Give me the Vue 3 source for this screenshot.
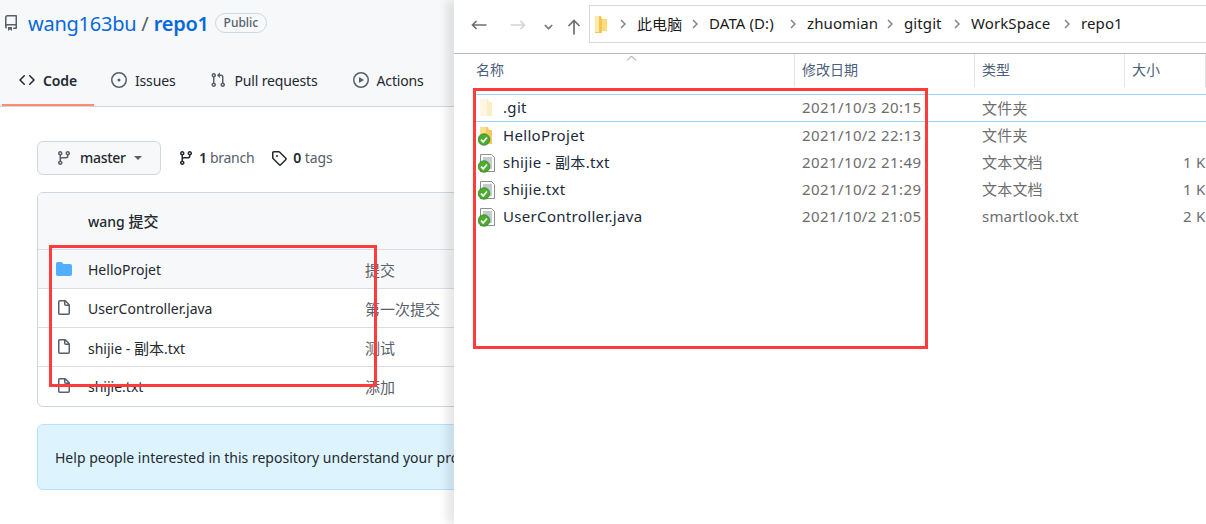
<script setup>
const tabs = [
  { label: 'Code', icon: 'code', active: true },
  { label: 'Issues', icon: 'issue' },
  { label: 'Pull requests', icon: 'pr' },
  { label: 'Actions', icon: 'play' },
]
const icons = {
  repo: 'M2 2.5A2.5 2.5 0 014.5 0h8.75a.75.75 0 01.75.75v12.5a.75.75 0 01-.75.75h-2.5a.75.75 0 110-1.5h1.75v-2h-8a1 1 0 00-.714 1.7.75.75 0 01-1.072 1.05A2.495 2.495 0 012 11.5v-9zm10.5-1V9h-8c-.356 0-.694.074-1 .208V2.5a1 1 0 011-1h8zM5 12.25v3.25a.25.25 0 00.4.2l1.45-1.087a.25.25 0 01.3 0L8.6 15.7a.25.25 0 00.4-.2v-3.25a.25.25 0 00-.25-.25h-3.5a.25.25 0 00-.25.25z',
  code: 'M4.72 3.22a.75.75 0 011.06 1.06L2.06 8l3.72 3.72a.75.75 0 11-1.06 1.06L.47 8.53a.75.75 0 010-1.06l4.25-4.25zm6.56 0a.75.75 0 10-1.06 1.06L13.94 8l-3.72 3.72a.75.75 0 101.06 1.06l4.25-4.25a.75.75 0 000-1.06l-4.25-4.25z',
  issue: 'M8 9.5a1.5 1.5 0 100-3 1.5 1.5 0 000 3zM8 0a8 8 0 100 16A8 8 0 008 0zM1.5 8a6.5 6.5 0 1113 0 6.5 6.5 0 01-13 0z',
  pr: 'M7.177 3.073L9.573.677A.25.25 0 0110 .854v4.792a.25.25 0 01-.427.177L7.177 3.427a.25.25 0 010-.354zM3.75 2.5a.75.75 0 100 1.5.75.75 0 000-1.5zm-2.25.75a2.25 2.25 0 113 2.122v5.256a2.251 2.251 0 11-1.5 0V5.372A2.25 2.25 0 011.5 3.25zM11 2.5h-1V4h1a1 1 0 011 1v5.628a2.251 2.251 0 101.5 0V5A2.5 2.5 0 0011 2.5zm1 10.25a.75.75 0 111.5 0 .75.75 0 01-1.5 0zM3.75 12a.75.75 0 100 1.5.75.75 0 000-1.5z',
  play: 'M1.5 8a6.5 6.5 0 1113 0 6.5 6.5 0 01-13 0zM8 0a8 8 0 100 16A8 8 0 008 0zM6.379 5.227A.25.25 0 006 5.442v5.117a.25.25 0 00.379.214l4.264-2.559a.25.25 0 000-.428L6.379 5.227z',
  branch: 'M11.75 2.5a.75.75 0 100 1.5.75.75 0 000-1.5zm-2.25.75a2.25 2.25 0 113 2.122V6A2.5 2.5 0 0110 8.5H6a1 1 0 00-1 1v1.128a2.251 2.251 0 11-1.5 0V5.372a2.25 2.25 0 111.5 0v1.836A2.492 2.492 0 016 7h4a1 1 0 001-1v-.628A2.25 2.25 0 019.5 3.25zM4.25 12a.75.75 0 100 1.5.75.75 0 000-1.5zM3.5 3.25a.75.75 0 111.5 0 .75.75 0 01-1.5 0z',
  tag: 'M2.5 7.775V2.75a.25.25 0 01.25-.25h5.025a.25.25 0 01.177.073l6.25 6.25a.25.25 0 010 .354l-5.025 5.025a.25.25 0 01-.354 0l-6.25-6.25a.25.25 0 01-.073-.177zm-1.5 0V2.75C1 1.784 1.784 1 2.75 1h5.025c.464 0 .91.184 1.238.513l6.25 6.25a1.75 1.75 0 010 2.474l-5.026 5.026a1.75 1.75 0 01-2.474 0l-6.25-6.25A1.75 1.75 0 011 7.775zM6 5a1 1 0 100 2 1 1 0 000-2z',
  file: 'M3.75 1.5a.25.25 0 00-.25.25v11.5c0 .138.112.25.25.25h8.5a.25.25 0 00.25-.25V6H9.75A1.75 1.75 0 018 4.25V1.5H3.75zm5.75.56v2.19c0 .138.112.25.25.25h2.19L9.5 2.06zM2 1.75C2 .784 2.784 0 3.75 0h5.086c.464 0 .909.184 1.237.513l3.414 3.414c.329.328.513.773.513 1.237v8.086A1.75 1.75 0 0112.25 15h-8.5A1.75 1.75 0 012 13.25V1.75z',
  folder: 'M1.75 1A1.75 1.75 0 000 2.75v10.5C0 14.216.784 15 1.75 15h12.5A1.75 1.75 0 0016 13.25v-8.5A1.75 1.75 0 0014.25 3H7.5a.25.25 0 01-.2-.1l-.9-1.2C6.07 1.26 5.55 1 5 1H1.75z',
}
const ghRows = [
  { pre: 'HelloProjet', cjk: '', post: '', msg: '提交', icon: 'folder' },
  { pre: 'UserController.java', cjk: '', post: '', msg: '第一次提交', icon: 'file' },
  { pre: 'shijie - ', cjk: '副本', post: '.txt', msg: '测试', icon: 'file' },
  { pre: 'shijie.txt', cjk: '', post: '', msg: '添加', icon: 'file' },
]
const crumbs = [
  { t: '此电脑', w: 45 },
  { t: 'DATA (D:)', w: 71 },
  { t: 'zhuomian', w: 70 },
  { t: 'gitgit', w: 40 },
  { t: 'WorkSpace', w: 83 },
  { t: 'repo1', w: 43 },
]
const files = [
  { name: '.git', date: '2021/10/3 20:15', type: '文件夹', size: '', kind: 'hidden' },
  { name: 'HelloProjet', date: '2021/10/2 22:13', type: '文件夹', size: '', kind: 'folder' },
  { name: 'shijie - 副本.txt', date: '2021/10/2 21:49', type: '文本文档', size: '1 KB', kind: 'doc' },
  { name: 'shijie.txt', date: '2021/10/2 21:29', type: '文本文档', size: '1 KB', kind: 'doc' },
  { name: 'UserController.java', date: '2021/10/2 21:05', type: 'smartlook.txt', size: '2 KB', kind: 'doc' },
]
</script>

<template>
  <div class="screen">
    <section class="github">
      <header class="gh-head">
        <div class="title">
          <svg class="octo repo-icon" viewBox="0 0 16 16"><path :d="icons.repo" /></svg>
          <a class="owner">wang163bu</a>
          <span class="slash">/</span>
          <a class="repo">repo1</a>
          <span class="badge">Public</span>
        </div>
        <nav class="tabs">
          <div v-for="t in tabs" :key="t.label" class="tab" :class="{ active: t.active }">
            <svg class="octo" viewBox="0 0 16 16"><path :d="icons[t.icon]" /></svg>
            <span>{{ t.label }}</span>
          </div>
        </nav>
      </header>
      <main class="gh-main">
        <div class="branch-row">
          <div class="branch-btn">
            <svg class="octo" viewBox="0 0 16 16"><path :d="icons.branch" /></svg>
            <span class="lift">master</span>
            <i class="caret"></i>
          </div>
          <div class="stat first">
            <svg class="octo dark" viewBox="0 0 16 16"><path :d="icons.branch" /></svg>
            <span class="lift"><b>1</b> branch</span>
          </div>
          <div class="stat tags">
            <svg class="octo dark" viewBox="0 0 16 16"><path :d="icons.tag" /></svg>
            <span class="lift"><b>0</b> tags</span>
          </div>
        </div>
        <div class="file-box">
          <div class="commit"><span class="lift">wang <span class="cjk">提交</span></span></div>
          <div v-for="(r, i) in ghRows" :key="r.pre" class="gh-row" :class="{ tint: i === 0 }">
            <svg class="octo" :class="{ blue: r.icon === 'folder' }" viewBox="0 0 16 16"><path :d="icons[r.icon]" /></svg>
            <span class="gh-name">{{ r.pre }}<span v-if="r.cjk" class="cjk">{{ r.cjk }}</span>{{ r.post }}</span>
            <span class="gh-msg">{{ r.msg }}</span>
          </div>
        </div>
        <div class="notice"><span>Help people interested in this repository understand your project by adding a README.</span></div>
      </main>
    </section>

    <section class="explorer">
      <div class="toolbar">
        <svg class="nav back" width="16" height="10" viewBox="0 0 16 10"><path d="M15.5 5H1.5M5.5 1l-4 4 4 4" /></svg>
        <svg class="nav fwd" width="16" height="10" viewBox="0 0 16 10"><path d="M.5 5h14M10.5 1l4 4-4 4" /></svg>
        <svg class="nav drop" width="9" height="6" viewBox="0 0 9 6"><path d="M.8 1l3.7 3.7L8.2 1" /></svg>
        <svg class="nav up" width="14" height="16" viewBox="0 0 14 16"><path d="M7 15.5V1.5M1.5 7l5.5-5.5L12.5 7" /></svg>
        <div class="address">
          <svg class="addr-folder" width="13" height="17" viewBox="0 0 13 17"><path d="M0 0h6l1 3v14H0z" fill="#f5c451" /><path d="M0 0h4v16H0z" fill="#fde9a9" /><path d="M7 3h5v12H7z" fill="#fddc7e" /></svg>
          <template v-for="c in crumbs" :key="c.t">
            <svg class="chev" width="6" height="10" viewBox="0 0 6 10"><path d="M1 1l4 4-4 4" /></svg>
            <span class="crumb" :style="{ width: c.w + 'px' }">{{ c.t }}</span>
          </template>
        </div>
      </div>
      <div class="cols">
        <span class="col-name">名称<svg class="sort" width="11" height="6" viewBox="0 0 11 6"><path d="M1 5.5l4.5-4.5 4.5 4.5" /></svg></span>
        <span class="col-date">修改日期</span>
        <span class="col-type">类型</span>
        <span class="col-size">大小</span>
      </div>
      <div class="list">
        <div v-for="f in files" :key="f.name" class="row" :class="{ selected: f.kind === 'hidden' }">
          <div class="cell-name">
            <svg class="ficon" width="18" height="20" viewBox="0 0 18 20">
              <template v-if="f.kind === 'hidden'">
                <path d="M2 1h8l1 3h3v14H2z" fill="#fbeec4" />
                <path d="M2 1h7v17H2z" fill="#fdf6e2" />
              </template>
              <template v-else-if="f.kind === 'folder'">
                <path d="M2 1h8l1 3h3v14H2z" fill="#f5c95f" />
                <path d="M2 1h6v15H2z" fill="#fbe08f" />
              </template>
              <template v-else>
                <path d="M2.5 1.5h11l3 3v14h-14z" fill="#fff" stroke="#8a8f8f" />
                <path d="M5 5h9M5 7h9M5 9h9M5 11h9M10 13h4M10 15h4" stroke="#8b969d" />
              </template>
              <template v-if="f.kind !== 'hidden'">
                <circle cx="6" cy="13.5" r="5.8" fill="#4aad2c" />
                <circle cx="6" cy="13.5" r="5.8" fill="none" stroke="#2d7a20" stroke-width=".7" />
                <path d="M3 13.7l2.2 2.2L9 11.5" fill="none" stroke="#fff" stroke-width="1.7" />
              </template>
            </svg>
            <span class="fname">{{ f.name }}</span>
          </div>
          <span class="cell-date">{{ f.date }}</span>
          <span class="cell-type">{{ f.type }}</span>
          <span class="cell-size">{{ f.size }}</span>
        </div>
      </div>
    </section>

    <div class="mark mark-left"></div>
    <div class="mark mark-right"></div>
  </div>
</template>

<style>
html, body { margin: 0; background: #fff; }
</style>

<style scoped>
.screen {
  position: relative;
  display: flex;
  width: 1206px;
  height: 524px;
  overflow: hidden;
  font-family: "Noto Sans", "Noto Sans CJK SC", sans-serif;
  background: #fff;
}
.github { width: 454px; flex: none; overflow: hidden; color: #24292f; }
.octo { width: 16px; height: 16px; flex: none; fill: #57606a; fill-rule: evenodd; }
.octo.dark { fill: #24292f; }
.octo.blue { fill: #54aeff; }
.lift { padding-bottom: 2px; }
.cjk { font-size: 15px; }

.gh-head { height: 106px; background: #f6f8fa; border-bottom: 1px solid #d0d7de; }
.title { height: 46px; display: flex; align-items: center; white-space: nowrap; font-size: 20px; padding-left: 3px; }
.repo-icon { margin-right: 9px; }
.owner { color: #0969da; letter-spacing: -.25px; }
.slash { color: #57606a; margin: 0 5px; }
.repo { color: #0969da; font-weight: 600; letter-spacing: -.3px; }
.badge { margin-left: 6px; font-size: 12px; font-weight: 500; color: #57606a; border: 1px solid #d0d7de; border-radius: 10px; padding: 0 8px; line-height: 18px; }
.tabs { height: 60px; display: flex; padding-left: 2px; box-sizing: border-box; white-space: nowrap; }
.tab { display: flex; align-items: center; gap: 8px; font-size: 14px; height: 60px; padding: 8px 17px 0; margin-right: 1px; box-sizing: border-box; letter-spacing: -.15px; }
.tab.active { font-weight: 600; border-bottom: 2px solid #fd8c73; padding-top: 10px; margin-right: 0; }
.tab.active .octo { fill: #24292f; }

.gh-main { padding: 34px 0 0 37px; }
.branch-row { display: flex; align-items: center; height: 34px; white-space: nowrap; font-size: 14px; }
.branch-btn { display: flex; align-items: center; width: 124px; height: 34px; box-sizing: border-box; border: 1px solid #d0d7de; border-radius: 6px; background: #f6f8fa; padding-left: 18px; font-weight: 500; letter-spacing: -.3px; }
.branch-btn span { margin-left: 8px; }
.caret { width: 0; height: 0; margin-left: 8px; border: 4.5px solid transparent; border-top-color: #57606a; border-bottom: 0; }
.stat { display: flex; align-items: center; gap: 5px; margin-left: 17px; color: #57606a; letter-spacing: -.3px; }
.stat.tags { margin-left: 17px; gap: 6px; letter-spacing: -.1px; }
.stat b { color: #24292f; font-weight: 600; }

.file-box { width: 500px; margin-top: 17px; border: 1px solid #d0d7de; border-radius: 6px; font-size: 14px; box-sizing: border-box; height: 215px; overflow: hidden; }
.commit { height: 56px; background: #f6f8fa; padding-left: 50px; display: flex; align-items: center; font-weight: 500; }
.gh-row { display: flex; align-items: center; height: 39px; box-sizing: border-box; border-top: 1px solid #d8dee4; padding-left: 18px; white-space: nowrap; }
.gh-row.tint { background: #f6f8fa; }
.gh-name { width: 277px; margin-left: 16px; flex: none; }
.gh-msg { color: #57606a; font-size: 15px; }
.notice { width: 500px; height: 66px; box-sizing: border-box; margin-top: 17px; background: #ddf4ff; border: 1px solid #b6e3ff; border-radius: 6px; padding-left: 17px; display: flex; align-items: center; white-space: nowrap; overflow: hidden; font-size: 14px; color: #24292f; }

.explorer { position: relative; flex: 1; background: #fff; box-shadow: -8px 0 8px rgba(0, 0, 0, .09); color: #1a1a1a; font-size: 15px; overflow: hidden; }
.toolbar { height: 54px; box-sizing: border-box; display: flex; align-items: center; border-bottom: 1px solid #b9b9b9; padding-left: 17px; }
.nav { flex: none; fill: none; stroke: #6f6f6f; stroke-width: 1.7; }
.back, .fwd { margin-top: -3px; }
.fwd { margin-left: 23px; stroke: #d4d4d4; }
.drop { margin-left: 18px; stroke: #7a7a7a; }
.up { margin-left: 14px; }
.address { margin-left: 8px; margin-top: -5px; height: 38px; flex: 1; box-sizing: border-box; border: 1px solid #d9d9d9; border-right: 0; display: flex; align-items: center; padding-left: 5px; white-space: nowrap; }
.addr-folder { flex: none; margin-right: 2px; }
.chev { flex: none; fill: none; stroke: #7d7d7d; stroke-width: 1.4; margin: 0 11px 0 10px; }
.crumb { flex: none; letter-spacing: .1px; padding-bottom: 2px; box-sizing: content-box; }
.cols { height: 33px; display: grid; grid-template-columns: 341px 180px 150px 1fr; font-size: 14px; color: #4c607a; }
.cols span { position: relative; padding-left: 7px; line-height: 31px; border-right: 1px solid #e5e5e5; box-sizing: border-box; }
.cols .col-name { padding-left: 22px; }
.sort { position: absolute; left: 172px; top: 1px; fill: none; stroke: #8f8f8f; }
.list { padding-top: 7px; }
.row { height: 27px; display: grid; grid-template-columns: 348px 180px 201px 1fr; align-items: center; box-sizing: border-box; white-space: nowrap; color: #6d6d6d; }
.row.selected { height: 28px; border-top: 1px solid #99d1ff; border-bottom: 1px solid #99d1ff; margin-left: 20px; grid-template-columns: 328px 180px 201px 1fr; }
.cell-name { display: flex; align-items: center; padding-left: 24px; color: #1a2a3a; }
.row.selected .cell-name { padding-left: 4px; }
.ficon { flex: none; margin-right: 7px; }
.fname { letter-spacing: .32px; padding-bottom: 2px; }
.cell-date { letter-spacing: .4px; padding-bottom: 2px; }
.cell-type { letter-spacing: .2px; padding-bottom: 2px; }
.cell-size { overflow: hidden; letter-spacing: .3px; padding-bottom: 2px; }

.mark { position: absolute; border: 3px solid #ff3b3b; box-sizing: border-box; pointer-events: none; }
.mark-left { left: 49px; top: 245px; width: 328px; height: 142px; }
.mark-right { left: 473px; top: 88px; width: 455px; height: 261px; }
</style>
